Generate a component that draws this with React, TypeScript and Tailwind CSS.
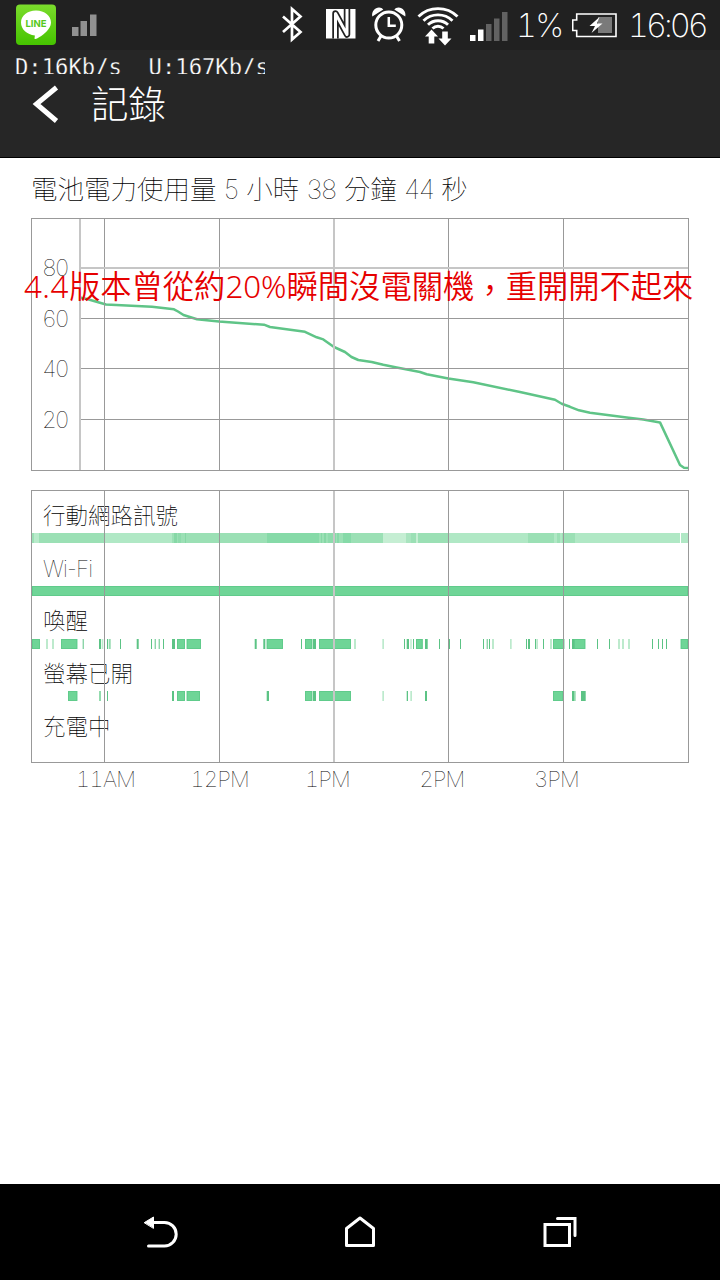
import type { ReactNode } from 'react';

type Segment = [start: number, end: number, color: string];

const MAIN = '#6fd597';
const DARK = '#5cc385';
const LIGHT = '#bdeacd';

const hours = ['11AM', '12PM', '1PM', '2PM', '3PM'];

const batteryPoints =
  '80,297.5 87,299 106,304.5 152,306.8 174,309.3 178,311.5 183.5,315 197,319.3 219,321.6 264,324.7 270,327 305,331.8 316.7,337.3 323.3,339.4 334,347 345,352 351.5,357 358.3,360 371.7,362 383.3,364.7 396.7,367.4 420,372 426.7,374.3 448.3,378.5 473.3,382.3 520,392 555,399.8 561.7,403.8 570,406.8 579,410.3 590,412.8 626.7,417.6 643.3,419.6 660,422.4 680,465 684,467.7 689,468';

const signal: Segment[] = [
  [32, 34, '#9be0b5'],
  [34, 39, '#b8ebcb'],
  [39, 105, '#9be0b5'],
  [105, 172, '#b0e8c5'],
  [172, 174, '#9be0b5'],
  [174, 177, '#86d8a6'],
  [177, 178, '#9be0b5'],
  [178, 181, '#8edbac'],
  [181, 185, '#9be0b5'],
  [185, 186, '#86d8a6'],
  [186, 267, '#9be0b5'],
  [267, 319, '#86daa8'],
  [319, 321, '#9be0b5'],
  [321, 322, '#86d8a6'],
  [322, 324, '#9be0b5'],
  [324, 326, '#86d8a6'],
  [326, 328, '#9be0b5'],
  [328, 333, '#8edbac'],
  [333, 336, '#86daa8'],
  [336, 337, '#9be0b5'],
  [337, 339, '#86daa8'],
  [339, 343, '#9be0b5'],
  [343, 351, '#86daa8'],
  [351, 383, '#9be0b5'],
  [383, 406, '#c5eed3'],
  [406, 411, '#a9e4bf'],
  [411, 416, '#9be0b5'],
  [416, 418, '#c5eed3'],
  [418, 449, '#9be0b5'],
  [449, 528, '#b0e8c5'],
  [528, 554, '#9be0b5'],
  [554, 557, '#b0e8c5'],
  [557, 560, '#9be0b5'],
  [560, 562, '#b0e8c5'],
  [562, 575, '#9be0b5'],
  [575, 680, '#b0e8c5'],
  [681, 688, '#b0e8c5'],
];

const wifi: Segment[] = [[32, 688, MAIN]];

const awake: Segment[] = [
  [32, 40, MAIN], [46, 48, LIGHT], [52, 54, LIGHT], [61, 77.3, MAIN], [82.7, 83.7, DARK],
  [99, 101, DARK], [101.7, 103.3, LIGHT], [107, 108, DARK], [108.7, 110.7, '#93dbae'],
  [120, 121, DARK], [136.7, 138.7, DARK], [151, 152, DARK], [154.7, 155.7, DARK],
  [158.7, 159.7, DARK], [163, 164, DARK], [172, 175, DARK], [177, 185, MAIN], [186.7, 201, MAIN],
  [254.7, 256.7, DARK], [263.3, 265.3, DARK], [266.7, 283, MAIN], [301, 302, DARK],
  [305, 312.3, MAIN], [313, 316, DARK], [319, 351, MAIN], [354, 356, LIGHT], [382.3, 384, LIGHT],
  [404, 405, DARK], [406.7, 409, DARK], [410.3, 411.7, LIGHT], [413, 414, DARK],
  [416, 422.7, MAIN], [425, 427.7, DARK], [439, 440, DARK], [449, 450, DARK], [460, 461, DARK],
  [483, 484, DARK], [486.7, 487.7, DARK], [489, 490, DARK], [492, 494, LIGHT], [510, 511.7, LIGHT],
  [526, 527, DARK], [528, 530, DARK], [535, 536.3, DARK], [537, 538, LIGHT], [543, 544, DARK],
  [550, 552, LIGHT], [553, 564.3, MAIN], [569, 570, DARK], [572, 574, DARK], [574, 585.3, MAIN],
  [597, 598, DARK], [609, 610, DARK], [618, 620, LIGHT], [622, 624, LIGHT], [628, 630, LIGHT],
  [652, 653, DARK], [658, 659, DARK], [662, 663, DARK], [666, 667, DARK], [680.7, 688, MAIN],
];

const screenOn: Segment[] = [
  [68, 77.3, MAIN], [99, 101, '#93dbae'], [107, 108, DARK], [172, 174, DARK], [177, 185, MAIN],
  [186.7, 200, MAIN], [266.7, 269, DARK], [305, 312.3, MAIN], [313, 316, DARK], [319, 351, MAIN],
  [382.3, 384, LIGHT], [406.7, 408, DARK], [410.3, 412, LIGHT], [425, 427, DARK],
  [553, 563.3, MAIN], [572, 574, DARK], [574, 575.7, '#93dbae'], [581, 585.7, DARK],
];

const rows: { label: string; segments: Segment[]; outlined?: boolean }[] = [
  { label: '行動網路訊號', segments: signal },
  { label: 'Wi-Fi', segments: wifi, outlined: true },
  { label: '喚醒', segments: awake, outlined: true },
  { label: '螢幕已開', segments: screenOn, outlined: true },
  { label: '充電中', segments: [] },
];

function Strip({ segments, outlined }: { segments: Segment[]; outlined?: boolean }) {
  return (
    <svg className="block h-2.5 w-full" viewBox="32 0 656 10" preserveAspectRatio="none">
      {segments.map(([start, end, color]) => (
        <g key={start}>
          <rect x={start} y={0} width={end - start} height={10} fill={color} />
          {outlined && color === MAIN && (
            <rect x={start + 0.5} y={0.5} width={end - start - 1} height={9} fill="none" stroke="#5fcb8a" strokeWidth={0.9} />
          )}
        </g>
      ))}
    </svg>
  );
}

function GridLines({ top, height }: { top: number; height: number }) {
  return (
    <g>
      {[104, 219, 448, 563].map((x) => (
        <rect key={x} x={x} y={top} width={1} height={height} fill="#999999" />
      ))}
      <rect x={333} y={top} width={2} height={height} fill="#c6c6c6" />
    </g>
  );
}

function StatusBar() {
  return (
    <div className="flex h-[50px] items-center bg-[#212121] text-white">
      {/* Messenger notification */}
      <svg className="ml-4 block" width="40" height="42" viewBox="0 0 40 42">
        <defs>
          <linearGradient id="line" x1="0" y1="0" x2="0" y2="1">
            <stop offset="0" stopColor="#7bdc2c" />
            <stop offset="1" stopColor="#45c300" />
          </linearGradient>
        </defs>
        <rect x="0" y="0.5" width="40" height="40.5" rx="4" fill="url(#line)" />
        <path d="M20 6.500c8.600 0 15 5.400 15 12 0 4.300-3.500 8.700-7.500 11.700-3 2.300-6 4.300-8.200 4.800-.8.200-.8-.5-.7-1.200l.3-2.300C11 30.600 5 25.500 5 18.500c0-6.600 6.400-12 15-12z" fill="#fff" />
        <text x="20" y="22.500" textAnchor="middle" fontFamily="Inter, sans-serif" fontWeight="700" fontSize="9.500" fill="#55c81c">LINE</text>
      </svg>
      <svg className="ml-4 block" width="25" height="50" viewBox="0 0 25 50">
        <path d="M0 27h6.500v9H0zM8.500 21H15v15H8.500zM18 14.500h6.500V36H18z" fill="#919191" />
      </svg>

      {/* Bluetooth, NFC, alarm, wifi, mobile signal */}
      <svg className="ml-[173px] block" width="240" height="50" viewBox="270 0 240 50">
        <path d="M283 16.500l17.500 15.500-8.500 7.500V9l8.500 7.500L283 32" fill="none" stroke="#fff" strokeWidth="2.700" />
        <rect x="326" y="9" width="29.500" height="29.500" fill="#fff" />
        <path d="M335.500 38.500V13.500L347 34.500V9" fill="none" stroke="#212121" strokeWidth="6.500" strokeLinejoin="round" />
        <path d="M335.500 38.500V13.500L347 34.500V9" fill="none" stroke="#fff" strokeWidth="3" strokeLinejoin="round" />
        <circle cx="388.800" cy="25" r="13" fill="none" stroke="#fff" strokeWidth="3" />
        <path d="M388.800 17v8.800h7" fill="none" stroke="#fff" strokeWidth="2.500" />
        <path d="M381 36l-3 5M396.500 36l3 5" stroke="#fff" strokeWidth="3" />
        <path d="M372.300 16.500c-1-5 2.700-9 6.700-9 2 0 3.300.7 4.300 2zM405.300 16.500c1-5-2.700-9-6.700-9-2 0-3.300.7-4.300 2z" fill="#fff" />
        <path d="M418.500 16.500a28 28 0 0 1 39 0M423.500 20.700a21 21 0 0 1 29 0M428 24.700a14.500 14.500 0 0 1 20 0M432.500 28.500a8 8 0 0 1 11 0" fill="none" stroke="#fff" strokeWidth="2.900" />
        <path d="M431.500 29.500l6.500 7h-3.700v7h-5.600v-7H425zM445 45.500l-6.500-7h3.700v-7h5.600v7h3.700z" fill="#fff" />
        <path d="M470 35h5.500v6H470zM478 29.500h5.500V41H478z" fill="#fff" />
        <path d="M486 24h5.500v17H486zM494 18.500h5.500V41H494zM502 12h5.500v29H502z" fill="#626262" />
      </svg>

      <span className="ml-1.5 w-[56px] whitespace-nowrap pt-0.5 font-[Inter] text-[32.500px] font-extralight leading-none tracking-[-1.700px] tabular-nums">1%</span>
      <svg className="block" width="45" height="50" viewBox="572 0 45 50">
        <path d="M576.700 14H616v22.500h-39.300V30.500h-4V20h4z" fill="none" stroke="#fff" strokeWidth="1.600" />
        <path d="M598 17h14v16h-14z" fill="#7a7a7a" />
        <path d="M599.500 17l-10 9h5.500l-3.500 7 11-9.500h-5.500z" fill="#fff" />
      </svg>
      <span className="ml-[11px] whitespace-nowrap pt-0.5 font-[Inter] text-[32.500px] font-extralight leading-none tracking-[-3px] tabular-nums">16:06</span>
    </div>
  );
}

function Header() {
  return (
    <header className="h-[108px] border-b border-black bg-[#262626] text-white">
      <div className="ml-[15px] h-6 w-[250px] overflow-hidden whitespace-pre font-['DejaVu_Sans_Mono',monospace] text-[22.200px] leading-[34px] [-webkit-text-stroke:0.300px_#262626]">
        D:16Kb/s  U:167Kb/s
      </div>
      <div className="flex items-center pt-2.5">
        <svg className="ml-8 block" width="27" height="40" viewBox="0 0 27 40">
          <path d="M24.500 3.500L4.500 20l20 17" fill="none" stroke="#fff" strokeWidth="5" />
        </svg>
        <h1 className="ml-8 -mt-1 font-['Noto_Sans_CJK_TC',sans-serif] text-[37.500px] font-light leading-[40px]">記錄</h1>
      </div>
    </header>
  );
}

function BatteryChart() {
  return (
    <div className="relative h-[253px]">
      <svg className="block" width="658" height="253" viewBox="31 218 658 253">
        <polyline points={batteryPoints} fill="none" stroke="#5fc487" strokeWidth="2.500" strokeLinejoin="round" />
        <GridLines top={219} height={251} />
        <rect x="79" y="219" width="2" height="251" fill="#c6c6c6" />
        <rect x="80" y="267" width="608" height="2" fill="#c6c6c6" />
        {[318, 368, 419].map((y) => (
          <rect key={y} x="81" y={y} width="607" height="1" fill="#999999" />
        ))}
        <rect x="31.500" y="218.500" width="657" height="252" fill="none" stroke="#999999" />
      </svg>
      <div className="absolute left-[11px] top-[25px] flex flex-col font-[Inter] text-[23px] font-thin leading-[50.500px] tracking-[-2px] tabular-nums text-black">
        {[80, 60, 40, 20].map((level) => (
          <span key={level}>{level}</span>
        ))}
      </div>
      <p className="absolute -left-[7px] top-[45px] whitespace-nowrap font-['Noto_Sans','Noto_Sans_CJK_TC',sans-serif] text-[31.300px] font-[350] leading-[46px] text-[#e60000]">
        <span className="tracking-[0.500px]">4.4</span>版本曾從約20%瞬間沒電關機<span className="relative top-1">，</span>重開開不起來
      </p>
    </div>
  );
}

function Timeline() {
  return (
    <div className="relative mt-[19px] h-[273px] border border-[#999]">
      {rows.map((row) => (
        <div key={row.label} className="h-[52.700px]">
          <div className="h-[42.300px] whitespace-nowrap pl-[11px] font-[Inter,'Noto_Sans_CJK_TC',sans-serif] text-[22.500px] font-thin leading-[50px] text-black">
            {row.label === 'Wi-Fi' ? <span className="tracking-[-0.900px]">{row.label}</span> : row.label}
          </div>
          <Strip segments={row.segments} outlined={row.outlined} />
        </div>
      ))}
      <svg className="absolute left-0 top-0" width="656" height="271" viewBox="32 491 656 271">
        <GridLines top={491} height={271} />
      </svg>
    </div>
  );
}

function NavButton({ children }: { children: ReactNode }) {
  return (
    <button className="flex w-[200px] items-center justify-center">
      <svg width="40" height="36" viewBox="0 0 40 36" fill="none" stroke="#fff" strokeWidth="3" strokeLinecap="round" strokeLinejoin="round">
        {children}
      </svg>
    </button>
  );
}

export default function App() {
  return (
    <div className="flex h-[1280px] w-[720px] flex-col overflow-hidden bg-white">
      <StatusBar />
      <Header />
      <main className="flex-1 px-[31px]">
        <h2 className="h-[60px] whitespace-nowrap font-[Inter,'Noto_Sans_CJK_TC',sans-serif] text-[26.500px] font-thin leading-[62px] text-black">
          電池電力使用量 5 小時 <span className="tracking-[-0.900px]">38</span> 分鐘 <span className="tracking-[-1px]">44</span> 秒
        </h2>
        <BatteryChart />
        <Timeline />
        <div className="ml-[45px] flex font-[Inter] text-[22px] font-thin leading-[32px] tracking-[-0.700px] tabular-nums text-black">
          {hours.map((hour) => (
            <span key={hour} className="w-[114.500px]">{hour}</span>
          ))}
        </div>
      </main>
      <nav className="flex h-24 justify-center bg-black">
        <NavButton>
          <path d="M14 8.500h10.500a11.700 11.700 0 0 1 0 23.400H8.500" />
          <path d="M4.500 8.500l9-5.500v11z" fill="#fff" strokeWidth="1" />
        </NavButton>
        <NavButton>
          <path d="M6.500 31.500V14.500L20 4l13.500 10.500v17z" />
        </NavButton>
        <NavButton>
          <path d="M5 10.500h24.500v21H5zM17.500 4.500H35V21.500" strokeLinejoin="miter" />
        </NavButton>
      </nav>
    </div>
  );
}
